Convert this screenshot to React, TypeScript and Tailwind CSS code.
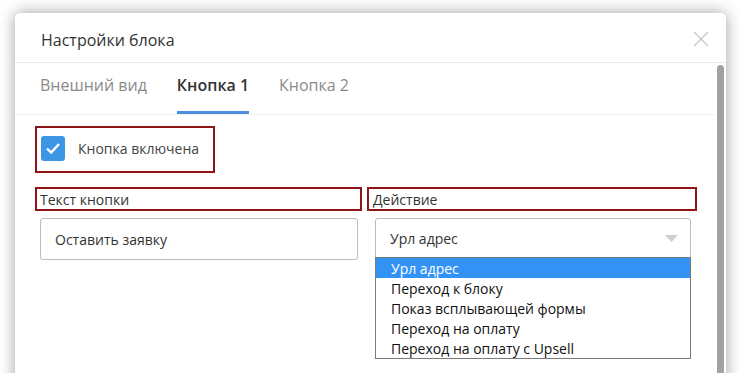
import { useState } from "react"

const options = [
    "Урл адрес",
    "Переход к блоку",
    "Показ всплывающей формы",
    "Переход на оплату",
    "Переход на оплату с Upsell",
]

export default function App() {
    const [tab] = useState(1)
    const tabs = ["Внешний вид", "Кнопка 1", "Кнопка 2"]

    return (
        <div className="h-screen overflow-hidden bg-white pt-[13px] pl-[15px] font-['Open_Sans',sans-serif]">
            <div className="w-[711px] h-[420px] bg-white rounded-t-[5px] shadow-[0_0_16px_rgba(0,0,0,0.38)] flex flex-col">
                <header className="h-[50px] shrink-0 border-b border-[#ececec] flex items-center justify-between pl-[26px] pr-[17px]">
                    <h1 className="text-[16px] text-[#333] pt-[4px]">Настройки блока</h1>
                    <svg width="16" height="16" viewBox="0 0 16 16" className="mt-[2px]">
                        <path d="M1 1 L15 15 M15 1 L1 15" stroke="#c4c4c4" strokeWidth="1.2" />
                    </svg>
                </header>

                <div className="flex flex-1">
                    <div className="w-[700px] relative">
                        <nav className="h-[52px] border-b border-[#efefef] flex items-end gap-[30px] pl-[25px]">
                            {tabs.map((t, i) => (
                                <span
                                    key={t}
                                    className={
                                        i === tab
                                            ? "h-[51px] flex items-center pb-[4px] border-b-[3px] border-[#4a90dc] text-[16px] font-semibold text-[#333]"
                                            : "h-[51px] flex items-center pb-[4px] border-b-[3px] border-transparent text-[16px] text-[#8a8a8a]"
                                    }
                                >
                                    {t}
                                </span>
                            ))}
                        </nav>

                        <div className="pl-[20px] pt-[11px]">
                            <label className="w-[180px] h-[47px] border-2 border-[#8e1515] flex items-center gap-[13px] pl-[4px] pb-[3px]">
                                <span className="w-[24px] h-[25px] rounded-[3px] bg-[#3d95e6] flex items-center justify-center">
                                    <svg width="16" height="14" viewBox="0 0 16 14">
                                        <path d="M2 7.5 L6.2 11.5 L14 3" stroke="white" strokeWidth="2.4" fill="none" />
                                    </svg>
                                </span>
                                <span className="text-[14px] text-[#444]">Кнопка включена</span>
                            </label>

                            <div className="grid grid-cols-[327px_330px] gap-x-[5px] mt-[14px]">
                                <div className="h-[24px] border-2 border-[#8e1515] flex items-center pl-[3px] text-[14px] text-[#333]">
                                    Текст кнопки
                                </div>
                                <div className="h-[24px] border-2 border-[#8e1515] flex items-center pl-[4px] text-[14px] text-[#333]">
                                    Действие
                                </div>
                                <div className="pt-[7px] pl-[5px]">
                                    <div className="w-[318px] h-[42px] border border-[#bdbdbd] rounded-[3px] flex items-center pl-[14px] text-[14px] text-[#333]">
                                        Оставить заявку
                                    </div>
                                </div>
                                <div className="pt-[7px] pl-[8px] relative">
                                    <div className="w-[316px] h-[40px] border border-[#bdbdbd] rounded-t-[3px] flex items-center justify-between pl-[14px] pr-[12px] text-[14px] text-[#333]">
                                        <span>Урл адрес</span>
                                        <svg width="13" height="7" viewBox="0 0 13 7">
                                            <path d="M0 0 L13 0 L6.5 7 Z" fill="#cfcfcf" />
                                        </svg>
                                    </div>
                                    <ul className="absolute left-[8px] top-[46px] w-[316px] bg-white border border-[#7a7a7a]">
                                        {options.map((o, i) => (
                                            <li
                                                key={o}
                                                className={
                                                    i === 0
                                                        ? "h-[20px] flex items-center pl-[15px] text-[14px] bg-[#3393f5] text-white"
                                                        : "h-[20px] flex items-center pl-[15px] text-[14px] text-[#111]"
                                                }
                                            >
                                                {o}
                                            </li>
                                        ))}
                                    </ul>
                                </div>
                            </div>
                        </div>
                    </div>
                    <div className="ml-[2px] mt-[2px] w-[7px] rounded-t-[4px] bg-[#a2a2a2]" />
                </div>
            </div>
        </div>
    )
}
